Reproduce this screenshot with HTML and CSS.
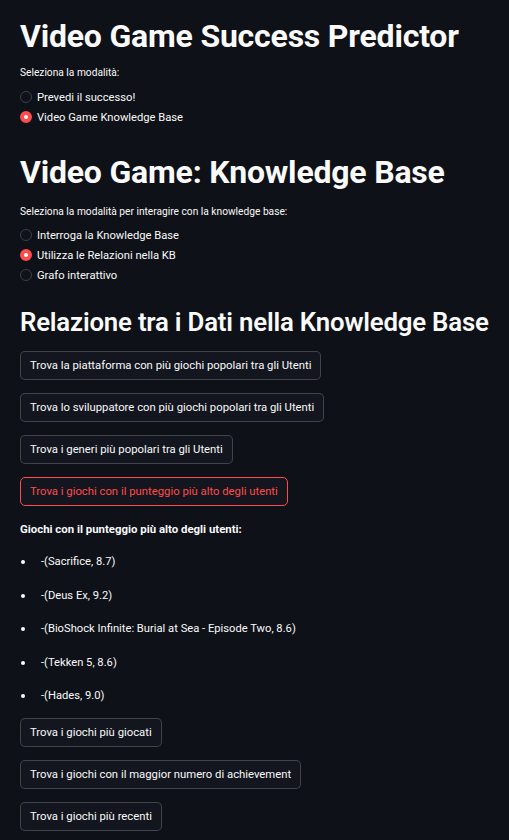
FILE: index.html
```html
<!DOCTYPE html>
<html lang="it">
<head>
<meta charset="utf-8">
<title>Video Game Success Predictor</title>
<link rel="stylesheet" href="styles.css">
</head>
<body>
<main class="main">
  <h1 class="title title-first">Video Game Success Predictor</h1>
  <p class="label label-first">Seleziona la modalità:</p>
  <div class="radio-group radio-group-first">
    <div class="radio"><span class="dot"></span><span>Prevedi il successo!</span></div>
    <div class="radio checked"><span class="dot"></span><span>Video Game Knowledge Base</span></div>
  </div>

  <h1 class="title title-second">Video Game: Knowledge Base</h1>
  <p class="label label-second">Seleziona la modalità per interagire con la knowledge base:</p>
  <div class="radio-group radio-group-second">
    <div class="radio"><span class="dot"></span><span>Interroga la Knowledge Base</span></div>
    <div class="radio checked"><span class="dot"></span><span>Utilizza le Relazioni nella KB</span></div>
    <div class="radio"><span class="dot"></span><span>Grafo interattivo</span></div>
  </div>

  <h2 class="subtitle">Relazione tra i Dati nella Knowledge Base</h2>
  <div class="buttons buttons-first">
    <button class="btn">Trova la piattaforma con più giochi popolari tra gli Utenti</button>
    <button class="btn">Trova lo sviluppatore con più giochi popolari tra gli Utenti</button>
    <button class="btn">Trova i generi più popolari tra gli Utenti</button>
    <button class="btn active">Trova i giochi con il punteggio più alto degli utenti</button>
  </div>

  <p class="result-title">Giochi con il punteggio più alto degli utenti:</p>
  <ul class="results">
    <li>-(Sacrifice, 8.7)</li>
    <li>-(Deus Ex, 9.2)</li>
    <li>-(BioShock Infinite: Burial at Sea - Episode Two, 8.6)</li>
    <li>-(Tekken 5, 8.6)</li>
    <li>-(Hades, 9.0)</li>
  </ul>

  <div class="buttons buttons-second">
    <button class="btn">Trova i giochi più giocati</button>
    <button class="btn">Trova i giochi con il maggior numero di achievement</button>
    <button class="btn">Trova i giochi più recenti</button>
  </div>
</main>
</body>
</html>
```

FILE: styles.css
```css
html, body {
  margin: 0;
  padding: 0;
  background: #0e1117;
  color: #fafafa;
  font-family: Roboto, "Liberation Sans", sans-serif;
}

.main {
  padding: 0 20px;
  display: flex;
  flex-direction: column;
  align-items: flex-start;
}

.title {
  margin: 0;
  font-size: 32px;
  line-height: 44px;
  font-weight: 700;
  letter-spacing: -0.2px;
  white-space: nowrap;
}
.title-first { margin-top: 14px; }
.title-second { margin-top: 23px; }

.label {
  margin: 0;
  font-size: 10.2px;
  line-height: 16px;
}
.label-first { margin-top: 7px; }
.label-second { margin-top: 10px; }

.radio-group {
  display: flex;
  flex-direction: column;
}
.radio-group-first { margin-top: 6px; }
.radio-group-second { margin-top: 5px; }

.radio {
  display: flex;
  align-items: center;
  height: 20px;
  font-size: 11.2px;
  gap: 5px;
}
.dot {
  width: 12px;
  height: 12px;
  box-sizing: border-box;
  border-radius: 50%;
  border: 1px solid #3d4049;
  background: #0f1218;
  flex: none;
}
.radio.checked .dot {
  border: 4px solid #ff4b4b;
  background: #fff;
}

.subtitle {
  margin: 19px 0 0;
  font-size: 25.8px;
  line-height: 36px;
  font-weight: 600;
  letter-spacing: -0.2px;
  white-space: nowrap;
}

.buttons {
  display: flex;
  flex-direction: column;
  align-items: flex-start;
  gap: 13px;
}
.buttons-first { margin-top: 11px; }
.buttons-second { margin-top: 5.5px; }

.btn {
  height: 29px;
  padding: 0 9px;
  border: 1px solid rgba(250, 250, 250, 0.2);
  border-radius: 5px;
  background: #13161e;
  color: #fafafa;
  font-family: inherit;
  font-size: 11.3px;
}
.btn.active {
  border-color: #ff4b4b;
  color: #ff4b4b;
}

.result-title {
  margin: 14px 0 0;
  font-size: 11.4px;
  line-height: 18px;
  font-weight: 700;
}

.results {
  list-style: none;
  margin: 7px 0 0;
  padding: 0;
}
.results li {
  position: relative;
  height: 33.5px;
  line-height: 33.5px;
  font-size: 11.2px;
  padding-left: 21px;
}
.results li::before {
  content: "";
  position: absolute;
  left: 1px;
  top: 15px;
  width: 4px;
  height: 4px;
  border-radius: 50%;
  background: #fafafa;
}
```
